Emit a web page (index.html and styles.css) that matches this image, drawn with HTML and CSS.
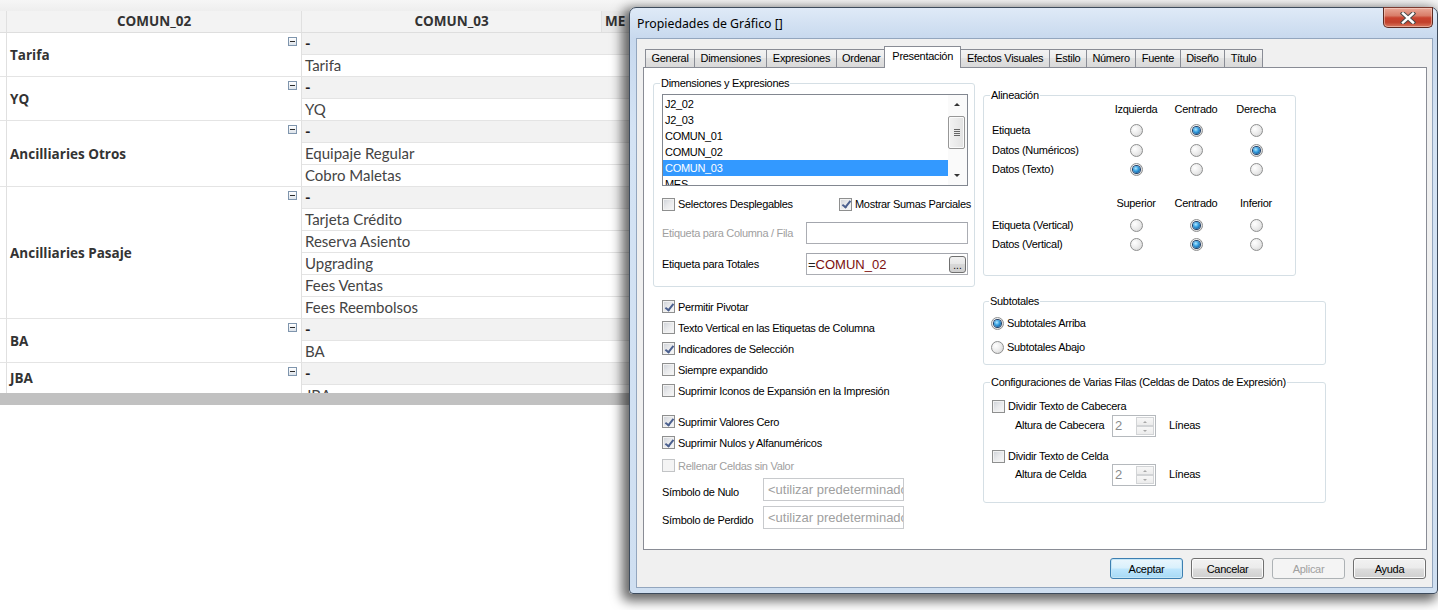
FILE: index.html
```html
<!DOCTYPE html>
<html lang="es">
<head>
<meta charset="utf-8">
<title>Propiedades de Gráfico</title>
<link rel="stylesheet" href="styles.css">
</head>
<body>
<div class="page">
  <div class="page-top"></div>
  <div class="pivot">
    <div class="prow head">
      <div class="c0"></div>
      <div class="c1 hcell">COMUN_02</div>
      <div class="c2h hcell">COMUN_03</div>
      <div class="c3h hcell">ME</div>
    </div>

    <div class="group">
      <div class="c0"><span class="tog tog-edge"></span></div>
      <div class="c1"><span class="glabel">Tarifa</span><span class="tog"></span></div>
      <div class="c2">
        <div class="sub sub-total">-</div>
        <div class="sub">Tarifa</div>
      </div>
    </div>

    <div class="group">
      <div class="c0"></div>
      <div class="c1"><span class="glabel">YQ</span><span class="tog"></span></div>
      <div class="c2">
        <div class="sub sub-total">-</div>
        <div class="sub">YQ</div>
      </div>
    </div>

    <div class="group">
      <div class="c0"><span class="tog tog-edge"></span></div>
      <div class="c1"><span class="glabel">Ancilliaries Otros</span><span class="tog"></span></div>
      <div class="c2">
        <div class="sub sub-total">-</div>
        <div class="sub">Equipaje Regular</div>
        <div class="sub">Cobro Maletas</div>
      </div>
    </div>

    <div class="group">
      <div class="c0"></div>
      <div class="c1"><span class="glabel">Ancilliaries Pasaje</span><span class="tog"></span></div>
      <div class="c2">
        <div class="sub sub-total">-</div>
        <div class="sub">Tarjeta Crédito</div>
        <div class="sub">Reserva Asiento</div>
        <div class="sub">Upgrading</div>
        <div class="sub">Fees Ventas</div>
        <div class="sub">Fees Reembolsos</div>
      </div>
    </div>

    <div class="group">
      <div class="c0"><span class="tog tog-edge"></span></div>
      <div class="c1"><span class="glabel">BA</span><span class="tog"></span></div>
      <div class="c2">
        <div class="sub sub-total">-</div>
        <div class="sub">BA</div>
      </div>
    </div>

    <div class="group">
      <div class="c0"></div>
      <div class="c1"><span class="glabel glabel-clip">JBA</span><span class="tog"></span></div>
      <div class="c2">
        <div class="sub sub-total">-</div>
        <div class="sub">JBA</div>
      </div>
    </div>
  </div>
  <div class="hscroll"></div>
</div>

<div class="window" role="dialog" aria-label="Propiedades de Gráfico">
  <div class="titlebar">
    <span class="title">Propiedades de Gráfico []</span>
    <button class="close" type="button" aria-label="Cerrar">
      <svg width="16" height="12" viewBox="0 0 16 12">
        <path d="M3 1.5 L13 10.5 M13 1.5 L3 10.5" stroke="#4a4a4a" stroke-width="4.4" stroke-linecap="square" fill="none"/>
        <path d="M3 1.5 L13 10.5 M13 1.5 L3 10.5" stroke="#ffffff" stroke-width="2.4" stroke-linecap="square" fill="none"/>
      </svg>
    </button>
  </div>

  <div class="client">
    <div class="tabs">
      <div class="tab">General</div>
      <div class="tab">Dimensiones</div>
      <div class="tab">Expresiones</div>
      <div class="tab">Ordenar</div>
      <div class="tab active">Presentación</div>
      <div class="tab">Efectos Visuales</div>
      <div class="tab">Estilo</div>
      <div class="tab">Número</div>
      <div class="tab">Fuente</div>
      <div class="tab">Diseño</div>
      <div class="tab">Título</div>
    </div>

    <div class="panel">
      <div class="col-left">
        <fieldset class="grp grp-dims">
          <legend>Dimensiones y Expresiones</legend>
          <div class="listbox">
            <ul class="list-items">
              <li>J2_02</li>
              <li>J2_03</li>
              <li>COMUN_01</li>
              <li>COMUN_02</li>
              <li class="sel">COMUN_03</li>
              <li>MES</li>
            </ul>
            <div class="vscroll">
              <span class="sarrow"><span class="tri tri-up"></span></span>
              <span class="thumb"><span class="grip"></span></span>
              <span class="sfill"></span>
              <span class="sarrow"><span class="tri tri-down"></span></span>
            </div>
          </div>
          <div class="chk-pair">
            <label class="chk"><span class="box"></span>Selectores Desplegables</label>
            <label class="chk"><span class="box on"></span>Mostrar Sumas Parciales</label>
          </div>
          <div class="field-row">
            <span class="flabel dis">Etiqueta para Columna / Fila</span>
            <span class="input"></span>
          </div>
          <div class="field-row field-row2">
            <span class="flabel">Etiqueta para Totales</span>
            <span class="input expr"><span class="expr-text">=<span class="ref">COMUN_02</span></span><span class="dots">...</span></span>
          </div>
        </fieldset>

        <div class="checks">
          <label class="chk row21"><span class="box on"></span>Permitir Pivotar</label>
          <label class="chk row21"><span class="box"></span>Texto Vertical en las Etiquetas de Columna</label>
          <label class="chk row21"><span class="box on"></span>Indicadores de Selección</label>
          <label class="chk row21"><span class="box"></span>Siempre expandido</label>
          <label class="chk row21"><span class="box"></span>Suprimir Iconos de Expansión en la Impresión</label>
          <label class="chk row21 gap-top"><span class="box on"></span>Suprimir Valores Cero</label>
          <label class="chk row21"><span class="box on"></span>Suprimir Nulos y Alfanuméricos</label>
          <label class="chk row21 dis rellenar"><span class="box box-dis"></span>Rellenar Celdas sin Valor</label>
          <div class="sym-row">
            <span class="sym-label">Símbolo de Nulo</span>
            <span class="input sym-input">&lt;utilizar predeterminado&gt;</span>
          </div>
          <div class="sym-row sym-row2">
            <span class="sym-label">Símbolo de Perdido</span>
            <span class="input sym-input">&lt;utilizar predeterminado&gt;</span>
          </div>
        </div>
      </div>

      <div class="col-right">
        <fieldset class="grp grp-align">
          <legend>Alineación</legend>
          <div class="align-grid">
            <span></span><span class="ah">Izquierda</span><span class="ah">Centrado</span><span class="ah">Derecha</span>
            <span class="al">Etiqueta</span><span class="radio"></span><span class="radio on"></span><span class="radio"></span>
            <span class="al">Datos (Numéricos)</span><span class="radio"></span><span class="radio"></span><span class="radio on"></span>
            <span class="al">Datos (Texto)</span><span class="radio on"></span><span class="radio"></span><span class="radio"></span>
            <span></span><span class="ah">Superior</span><span class="ah">Centrado</span><span class="ah">Inferior</span>
            <span class="al">Etiqueta (Vertical)</span><span class="radio"></span><span class="radio on"></span><span class="radio"></span>
            <span class="al">Datos (Vertical)</span><span class="radio"></span><span class="radio on"></span><span class="radio"></span>
          </div>
        </fieldset>

        <fieldset class="grp grp-sub">
          <legend>Subtotales</legend>
          <label class="opt"><span class="radio on"></span>Subtotales Arriba</label>
          <label class="opt opt2"><span class="radio"></span>Subtotales Abajo</label>
        </fieldset>

        <fieldset class="grp grp-cfg">
          <legend>Configuraciones de Varias Filas (Celdas de Datos de Expresión)</legend>
          <label class="chk cfg-chk"><span class="box"></span>Dividir Texto de Cabecera</label>
          <div class="spin-row">
            <span class="spin-label">Altura de Cabecera</span>
            <span class="spin"><span class="spin-val">2</span><span class="spin-btns"><span class="sb"><span class="tri-s tri-s-up"></span></span><span class="sb"><span class="tri-s tri-s-down"></span></span></span></span>
            <span class="spin-unit">Líneas</span>
          </div>
          <label class="chk cfg-chk cfg-chk2"><span class="box"></span>Dividir Texto de Celda</label>
          <div class="spin-row spin-row2">
            <span class="spin-label">Altura de Celda</span>
            <span class="spin"><span class="spin-val">2</span><span class="spin-btns"><span class="sb"><span class="tri-s tri-s-up"></span></span><span class="sb"><span class="tri-s tri-s-down"></span></span></span></span>
            <span class="spin-unit">Líneas</span>
          </div>
        </fieldset>
      </div>
    </div>

    <div class="buttons">
      <button class="btn btn-default" type="button">Aceptar</button>
      <button class="btn" type="button">Cancelar</button>
      <button class="btn btn-dis" type="button">Aplicar</button>
      <button class="btn" type="button">Ayuda</button>
    </div>
  </div>
</div>
</body>
</html>
```

FILE: styles.css
```css
* { box-sizing: border-box; }
html, body { margin: 0; padding: 0; }
body {
  width: 1438px;
  height: 610px;
  overflow: hidden;
  background: #ffffff;
  position: relative;
  font-family: "Liberation Sans", Arial, sans-serif;
}

/* ---------- background pivot table ---------- */
.page-top { height: 11px; background: linear-gradient(#f6f6f6, #eeeeee); }
.pivot {
  height: 382px;
  overflow: hidden;
  font-family: "Open Sans", sans-serif;
  color: #333;
}
.prow { display: flex; }
.head { height: 22px; background: #f3f3f3; border-bottom: 1px solid #dedede; }
.hcell { font-weight: 700; font-size: 13.5px; line-height: 21px; text-align: center; color: #333; }
.c0 { width: 7px; flex: none; border-right: 1px solid #e0e0e0; }
.c1 { width: 295px; flex: none; border-right: 1px solid #e0e0e0; }
.c2h { width: 300px; flex: none; border-right: 1px solid #e0e0e0; }
.c3h { flex: 1; background: #ebebeb; text-align: left; padding-left: 3px; }

.group { display: flex; }
.group .c0 { border-bottom: 1px solid #e4e4e4; background: #fff; }
.group .c1 { display: flex; border-bottom: 1px solid #e4e4e4; padding-left: 3px; background: #fff; }
.glabel { flex: 1; align-self: center; font-weight: 700; font-size: 13.5px; color: #333; }
.glabel-clip { padding-bottom: 14px; }
.tog {
  width: 9px; height: 9px; flex: none;
  margin: 4px 4px 0 0;
  border: 1px solid #7f95ad;
  background: linear-gradient(#ffffff, #dde3ea);
  position: relative;
}
.tog::after {
  content: ""; position: absolute;
  left: 1px; right: 1px; top: 3px; height: 1px;
  background: #2b2b2b;
}
.tog-edge { margin: 4px 0 0 -6px; }
.c2 { flex: 1; }
.sub {
  height: 22px;
  border-bottom: 1px solid #e4e4e4;
  padding-left: 3px;
  font-family: "Lato", sans-serif;
  font-size: 15px;
  line-height: 21px;
  color: #444;
  background: #fff;
}
.sub-total { background: #f2f2f2; font-weight: 700; color: #222; }
.hscroll { height: 12px; background: #c1c1c1; }

/* ---------- dialog window ---------- */
.window {
  position: absolute;
  left: 629px;
  top: 7px;
  width: 809px;
  height: 587px;
  border: 1px solid #3d4b5c;
  border-radius: 7px 7px 4px 4px;
  background: linear-gradient(#dfeaf7 0, #c8d9ee 30px, #d4e3f4 120px, #cfdff1 100%);
  padding: 0 4px 5px 6px;
  display: flex;
  flex-direction: column;
  box-shadow: -4px 4px 12px 3px rgba(0, 0, 0, 0.6);
  font-family: "Liberation Sans", Arial, sans-serif;
  font-size: 11px;
  letter-spacing: -0.3px;
  color: #000;
}
.titlebar { height: 30px; flex: none; display: flex; align-items: flex-start; }
.title {
  font-family: "Noto Sans", sans-serif;
  font-size: 12.3px;
  letter-spacing: 0;
  margin: 7px 0 0 1px;
  color: #000;
}
.close {
  margin-left: auto;
  margin-top: -1px;
  width: 50px;
  height: 21px;
  padding: 0;
  border: 1px solid #5b2a22;
  border-top-color: #7a3a30;
  border-radius: 0 0 5px 5px;
  background: linear-gradient(#eaa897 0%, #d97d69 40%, #c9432f 52%, #c2412c 75%, #d8785f 100%);
  box-shadow: inset 0 0 0 1px rgba(255, 230, 220, 0.45);
  display: flex;
  align-items: center;
  justify-content: center;
}
.close svg { display: block; }

.client {
  flex: 1;
  border: 1px solid #93a6be;
  background: #f0f0f0;
  padding: 7px 5px 8px 6px;
  display: flex;
  flex-direction: column;
}

/* tabs */
.tabs { display: flex; align-items: flex-end; height: 21px; flex: none; padding-left: 2px; }
.tab {
  height: 18px;
  padding: 0 5.5px;
  border: 1px solid #898c95;
  border-bottom: 0;
  margin-right: -1px;
  background: linear-gradient(#f3f3f3, #ebebeb 50%, #e2e2e2 50%, #d9d9d9);
  line-height: 17px;
  white-space: nowrap;
}
.tab.active {
  height: 22px;
  margin: 0 -1px -1px -2px;
  padding: 0 7.5px;
  background: #ffffff;
  position: relative;
  z-index: 1;
  line-height: 18px;
}

/* panel */
.panel {
  height: 483px;
  flex: none;
  border: 1px solid #898c95;
  background: #ffffff;
  display: flex;
  gap: 8px;
  padding: 9px 0 0 9px;
}
.col-left { width: 322px; flex: none; }
.col-right { width: 343px; flex: none; padding-top: 12px; }

.grp {
  margin: 0;
  min-width: 0;
  border: 1px solid #d5dfe5;
  border-radius: 3px;
}
.grp legend {
  padding: 0 1px;
  margin-left: -2px;
  line-height: 13px;
  color: #000;
}

.grp-dims { height: 210px; padding: 4px 6px 0 8px; }
.listbox {
  width: 306px;
  height: 92px;
  border: 1px solid #828790;
  display: flex;
  background: #fff;
}
.list-items {
  list-style: none;
  margin: 0;
  padding: 1px 0 0 0;
  flex: 1;
  overflow: hidden;
}
.list-items li { height: 16px; line-height: 16px; padding-left: 2px; white-space: nowrap; }
.list-items li.sel { background: #3399ff; color: #fff; }
.vscroll {
  width: 19px;
  flex: none;
  display: flex;
  flex-direction: column;
  align-items: flex-start;
  background: #fafafa;
}
.sarrow { height: 19px; width: 17px; display: flex; align-items: center; justify-content: center; flex: none; }
.tri { width: 0; height: 0; border-left: 3px solid transparent; border-right: 3px solid transparent; }
.tri-up { border-bottom: 3px solid #333; }
.tri-down { border-top: 3px solid #333; }
.thumb {
  margin-top: 2px;
  width: 17px;
  height: 33px;
  flex: none;
  border: 1px solid #979797;
  border-radius: 2px;
  background: linear-gradient(90deg, #f3f3f3, #e2e2e2);
  box-shadow: inset 0 0 0 1px #fbfbfb;
  display: flex;
  align-items: center;
  justify-content: center;
}
.grip {
  width: 6px; height: 7px;
  background: repeating-linear-gradient(#666 0 1px, transparent 1px 2px);
}
.sfill { flex: 1; }

.chk { display: flex; align-items: center; gap: 3px; white-space: nowrap; }
.chk-pair { display: grid; grid-template-columns: 177px auto; height: 16px; margin-top: 10px; }
.box {
  width: 13px; height: 13px; flex: none;
  border: 1px solid #8e8f8f;
  background: linear-gradient(135deg, #cdd1d7 0%, #e9eaec 50%, #f8f8f8 100%);
  box-shadow: inset 0 0 0 1px #f2f2f2;
  position: relative;
}
.box.on::after {
  content: "";
  position: absolute;
  left: 3.5px; top: 0.5px;
  width: 3px; height: 7px;
  border: solid #4a5f8e;
  border-width: 0 2px 2px 0;
  transform: rotate(38deg);
}
.box-dis { border-color: #c2c4c6; background: #f4f4f4; box-shadow: none; }
.dis { color: #a0a0a0; }

.field-row { display: grid; grid-template-columns: 144px 162px; align-items: center; margin-top: 10px; height: 22px; }
.field-row2 { margin-top: 9px; }
.flabel { white-space: nowrap; }
.flabel.dis { color: #a0a0a0; }
.input {
  height: 22px;
  border: 1px solid #abadb3;
  border-top-color: #a3a6ad;
  background: #fff;
  display: flex;
  align-items: center;
}
.expr { padding-left: 1px; }
.expr-text { flex: 1; font-size: 13px; letter-spacing: 0; color: #222; }
.ref { color: #7b0e0e; }
.dots {
  width: 17px; height: 17px; flex: none;
  margin-right: 1px;
  border: 1px solid #707070;
  border-radius: 3px;
  background: linear-gradient(#f2f2f2, #e6e6e6 50%, #d8d8d8 50%, #cfcfcf);
  font-size: 10px;
  line-height: 17px;
  text-align: center;
  letter-spacing: 0;
  color: #000;
}

.checks { margin-top: 9px; padding-left: 9px; }
.row21 { height: 21px; }
.gap-top { margin-top: 10px; }
.rellenar { margin-top: 2px; }
.sym-row { display: grid; grid-template-columns: 101px 141px; align-items: center; margin-top: 2px; }
.sym-row2 { margin-top: 5px; }
.sym-label { padding-top: 5px; white-space: nowrap; }
.sym-input {
  height: 23px;
  border-color: #c8cacd;
  color: #a0a0a0;
  font-size: 13px;
  letter-spacing: 0;
  padding-left: 4px;
  overflow: hidden;
  white-space: nowrap;
}

/* right column */
.grp-align { width: 313px; height: 187px; padding: 0 0 0 8px; }
.align-grid {
  display: grid;
  grid-template-columns: 114px 60px 60px 60px;
  grid-template-rows: 21px 20px 19px 34px 22px 19px 20px;
  align-items: start;
  margin-top: -3px;
}
.align-grid > span { line-height: 20px; white-space: nowrap; }
.ah { justify-self: center; }
.radio {
  width: 13px; height: 13px;
  justify-self: center;
  margin-top: 4px;
  border-radius: 50%;
  border: 1px solid #8e8f8f;
  background: radial-gradient(circle at 35% 35%, #ffffff 0%, #ebebeb 50%, #cdcdcd 100%);
  position: relative;
  flex: none;
}
.radio.on::after {
  content: "";
  position: absolute;
  left: 2px; top: 2px;
  width: 7px; height: 7px;
  border-radius: 50%;
  background: radial-gradient(circle at 40% 35%, #b4e8ff 0%, #3aa3e3 40%, #0f5e9e 80%);
  box-shadow: 0 0 0 1px #1f3f68;
}

.grp-sub { height: 70px; margin-top: 19px; padding: 5px 0 0 7px; }
.opt { display: flex; align-items: center; gap: 3px; height: 20px; }
.opt .radio { margin-top: 0; }
.opt2 { margin-top: 4px; }

.grp-cfg { height: 127px; margin-top: 11px; padding: 8px 0 0 8px; }
.cfg-chk { height: 18px; }
.cfg-chk2 { margin-top: 10px; }
.spin-row { display: flex; align-items: center; height: 22px; padding-left: 23px; }
.spin-row2 { margin-top: -1px; }
.spin-label { width: 97px; flex: none; white-space: nowrap; padding-bottom: 2px; }
.spin {
  width: 44px; height: 22px; flex: none;
  border: 1px solid #b5b9bd;
  background: #fff;
  display: flex;
}
.spin-val { flex: 1; padding-left: 2px; font-size: 13px; letter-spacing: 0; color: #8a8a8a; line-height: 20px; }
.spin-btns { width: 19px; flex: none; display: flex; flex-direction: column; padding: 1px 1px 1px 0; gap: 0; }
.sb {
  flex: 1;
  border: 1px solid #d2d4d6;
  background: linear-gradient(#f7f7f7, #ececec);
  display: flex; align-items: center; justify-content: center;
}
.tri-s { width: 0; height: 0; border-left: 2px solid transparent; border-right: 2px solid transparent; }
.tri-s-up { border-bottom: 2px solid #a8a8a8; }
.tri-s-down { border-top: 2px solid #a8a8a8; }
.spin-unit { margin-left: 13px; padding-bottom: 2px; }

/* buttons */
.buttons { display: flex; justify-content: flex-end; gap: 8px; margin-top: 8px; margin-right: 1px; flex: none; }
.btn {
  width: 73px; height: 21px;
  padding: 0;
  border: 1px solid #707070;
  border-radius: 3px;
  background: linear-gradient(#f2f2f2 0%, #ebebeb 48%, #dddddd 52%, #cfcfcf 100%);
  box-shadow: inset 0 0 0 1px #fbfbfb;
  font-family: "Liberation Sans", Arial, sans-serif;
  font-size: 11px;
  letter-spacing: -0.3px;
  color: #000;
}
.btn-default {
  border-color: #3c7fb1;
  background: linear-gradient(#eaf6fd 0%, #d9f0fc 48%, #bee6fd 52%, #a7d9f5 100%);
  box-shadow: inset 0 0 0 1px #c4e5f6;
}
.btn-dis {
  border-color: #adb2b5;
  background: #f4f4f4;
  box-shadow: none;
  color: #a0a0a0;
}
```
